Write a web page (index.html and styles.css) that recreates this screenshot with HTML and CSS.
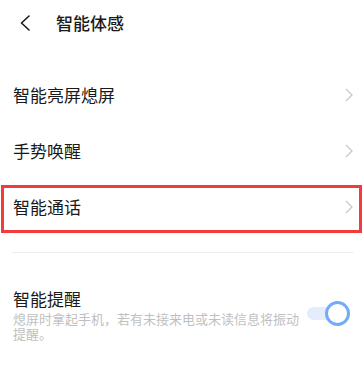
FILE: index.html
```html
<!DOCTYPE html>
<html lang="zh-CN">
<head>
<meta charset="utf-8">
<link rel="stylesheet" href="styles.css">
</head>
<body>
<div class="page">
  <header class="topbar">
    <svg class="back" width="12" height="16" viewBox="0 0 12 16"><path d="M10 1 L2.5 8 L10 15" fill="none" stroke="#1a1a1a" stroke-width="1.6" stroke-linecap="round" stroke-linejoin="round"/></svg>
    <h1 class="title">智能体感</h1>
  </header>
  <ul class="menu">
    <li class="row"><span class="label">智能亮屏熄屏</span><svg class="chev" width="8" height="14" viewBox="0 0 8 14"><path d="M1 1 L7 7 L1 13" fill="none" stroke="#c9c9c9" stroke-width="1.3"/></svg></li>
    <li class="row"><span class="label">手势唤醒</span><svg class="chev" width="8" height="14" viewBox="0 0 8 14"><path d="M1 1 L7 7 L1 13" fill="none" stroke="#c9c9c9" stroke-width="1.3"/></svg></li>
    <li class="row highlighted"><span class="label">智能通话</span><svg class="chev" width="8" height="14" viewBox="0 0 8 14"><path d="M1 1 L7 7 L1 13" fill="none" stroke="#c9c9c9" stroke-width="1.3"/></svg></li>
  </ul>
  <div class="divider"></div>
  <div class="setting">
    <div class="setting-text">
      <div class="setting-title">智能提醒</div>
      <div class="setting-desc">熄屏时拿起手机，若有未接来电或未读信息将振动提醒。</div>
    </div>
    <div class="switch"><span class="track"></span><span class="knob"></span></div>
  </div>
</div>
</body>
</html>
```
FILE: styles.css
```css
* { box-sizing: border-box; }
html, body {
  margin: 0;
  padding: 0;
  background: #ffffff;
}
body {
  font-family: "Noto Sans CJK SC", "Noto Sans", sans-serif;
  color: #1a1a1a;
  width: 364px;
  height: 379px;
  overflow: hidden;
}
.topbar {
  height: 45px;
  display: flex;
  align-items: center;
  padding-left: 19px;
}
.back { display: block; margin-top: 0; }
.title {
  margin: 0 0 0 25px;
  font-size: 17px;
  font-weight: 500;
  line-height: 22px;
  color: #1a1a1a;
}
.menu {
  list-style: none;
  margin: 22px 0 0 0;
  padding: 0;
}
.row {
  height: 56px;
  display: flex;
  align-items: center;
  justify-content: space-between;
  padding: 0 11px 0 13px;
  position: relative;
}
.label {
  font-size: 17px;
  line-height: 22px;
  color: #1a1a1a;
}
.chev { display: block; }
.highlighted::after {
  content: "";
  position: absolute;
  left: 1px;
  right: 2px;
  top: 6px;
  bottom: 2px;
  border: 3px solid #f23b3b;
}
.divider {
  height: 1px;
  background: #efefef;
  margin: 17px 10px 0 12px;
}
.setting {
  display: flex;
  align-items: center;
  justify-content: space-between;
  padding: 34px 14px 0 13px;
}
.setting-text { width: 292px; }
.setting-title {
  font-size: 17px;
  line-height: 24px;
  color: #1a1a1a;
}
.setting-desc {
  font-size: 13px;
  line-height: 15px;
  color: #bfbfbf;
}
.switch {
  position: relative;
  width: 43px;
  height: 25px;
  margin-bottom: 2px;
}
.track {
  position: absolute;
  left: 0;
  top: 6px;
  width: 38px;
  height: 13px;
  border-radius: 7px;
  background: #e5edfc;
}
.knob {
  position: absolute;
  right: 0;
  top: 0;
  width: 25px;
  height: 25px;
  border-radius: 50%;
  background: #ffffff;
  border: 3px solid #72abf6;
}
```
